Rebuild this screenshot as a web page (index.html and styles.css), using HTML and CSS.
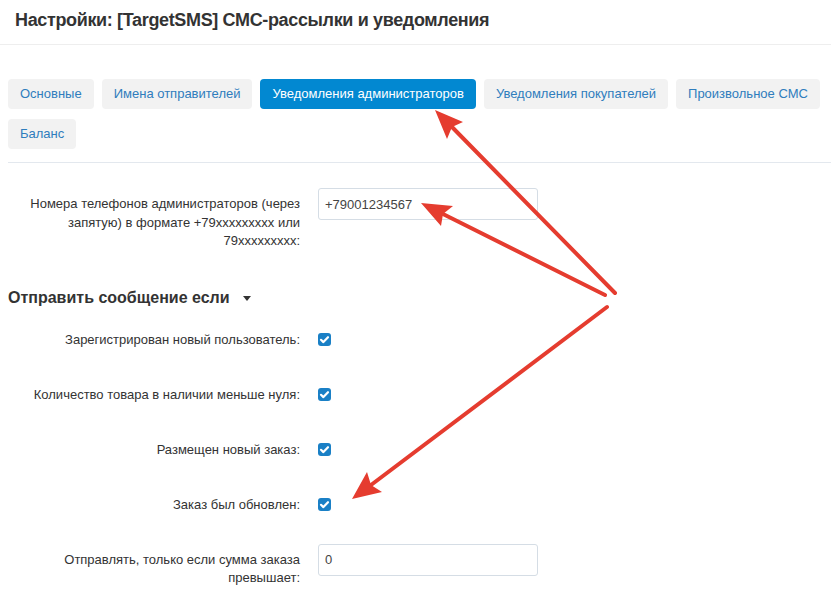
FILE: index.html
```html
<!DOCTYPE html>
<html lang="ru">
  <head>
    <meta charset="UTF-8" />
    <meta name="viewport" content="width=device-width, initial-scale=1.0" />
    <title>TargetSMS</title>
    <link rel="stylesheet" href="styles.css">
  </head>
  <body>
    <div class="page-header">
      <h1>Настройки: [TargetSMS] СМС-рассылки и уведомления</h1>
    </div>

    <div class="content">
      <div class="tabs">
        <a href="#" class="tab">Основные</a>
        <a href="#" class="tab">Имена отправителей</a>
        <a href="#" class="tab active">Уведомления администраторов</a>
        <a href="#" class="tab">Уведомления покупателей</a>
        <a href="#" class="tab">Произвольное СМС</a>
        <a href="#" class="tab">Баланс</a>
      </div>

      <div class="form">
        <div class="form-group">
          <label class="control-label">Номера телефонов администраторов (через запятую) в формате +79xxxxxxxxx или 79xxxxxxxxx:</label>
          <input class="form-control" type="text" value="+79001234567" />
        </div>

        <h3 class="section-title">Отправить сообщение если <span class="caret"></span></h3>

        <div class="form-group check-group">
          <label class="control-label">Зарегистрирован новый пользователь:</label>
          <div class="check-cell"><span class="check"><svg viewBox="0 0 13 13" width="13" height="13"><path d="M3 6.8 L5.4 9.1 L10 4.2" fill="none" stroke="#fff" stroke-width="2.2" stroke-linecap="round" stroke-linejoin="round"/></svg></span></div>
        </div>
        <div class="form-group check-group">
          <label class="control-label">Количество товара в наличии меньше нуля:</label>
          <div class="check-cell"><span class="check"><svg viewBox="0 0 13 13" width="13" height="13"><path d="M3 6.8 L5.4 9.1 L10 4.2" fill="none" stroke="#fff" stroke-width="2.2" stroke-linecap="round" stroke-linejoin="round"/></svg></span></div>
        </div>
        <div class="form-group check-group">
          <label class="control-label">Размещен новый заказ:</label>
          <div class="check-cell"><span class="check"><svg viewBox="0 0 13 13" width="13" height="13"><path d="M3 6.8 L5.4 9.1 L10 4.2" fill="none" stroke="#fff" stroke-width="2.2" stroke-linecap="round" stroke-linejoin="round"/></svg></span></div>
        </div>
        <div class="form-group check-group">
          <label class="control-label">Заказ был обновлен:</label>
          <div class="check-cell"><span class="check"><svg viewBox="0 0 13 13" width="13" height="13"><path d="M3 6.8 L5.4 9.1 L10 4.2" fill="none" stroke="#fff" stroke-width="2.2" stroke-linecap="round" stroke-linejoin="round"/></svg></span></div>
        </div>
        <div class="form-group last-group">
          <label class="control-label">Отправлять, только если сумма заказа превышает:</label>
          <input class="form-control" type="text" value="0" />
        </div>
      </div>
    </div>

    <!-- стрелки поверх скриншота -->
    <svg class="arrows" width="831" height="594" viewBox="0 0 831 594">
      <g stroke="#e53c2f" stroke-width="4" stroke-linecap="round" fill="none">
        <line x1="615" y1="293" x2="452" y2="127" />
        <line x1="605" y1="295" x2="443" y2="214" />
        <line x1="607" y1="307" x2="371" y2="485" />
      </g>
      <g fill="#e53c2f">
        <polygon points="435,110 463,122 452,127 447,139" />
        <polygon points="421,203 453,206 443,214 441,226" />
        <polygon points="352,499 382,492 371,485 367,472" />
      </g>
    </svg>
  </body>
</html>
```

FILE: styles.css
```css
html,
body {
  overflow: hidden;
}
body {
  font-family: "Liberation Sans", Arial, sans-serif;
  font-size: 13px;
  color: #333;
  margin: 0;
  padding: 0;
  background-color: #fff;
  position: relative;
  min-height: 594px;
}
.page-header {
  height: 44px;
  border-bottom: 1px solid #eee;
  padding: 0 15px;
}
.page-header h1 {
  margin: 0;
  font-size: 18px;
  letter-spacing: -0.35px;
  line-height: 40px;
  font-weight: bold;
  color: #333;
}
.content {
  padding: 34px 0 0 8px;
}
/* вкладки */
.tabs {
  display: flex;
  flex-wrap: wrap;
  gap: 10px 8px;
  padding-bottom: 13px;
  border-bottom: 1px solid #e3e8ee;
}
.tab {
  display: inline-block;
  height: 30px;
  line-height: 30px;
  padding: 0 12px;
  background-color: #f2f2f2;
  color: #2f7dbd;
  text-decoration: none;
  border-radius: 4px;
  font-size: 13px;
}
.tab.active {
  background-color: #0288d1;
  color: #fff;
}
/* форма */
.form {
  padding-top: 25px;
}
.form-group {
  display: grid;
  grid-template-columns: 292px 220px;
  column-gap: 18px;
  align-items: start;
}
.control-label {
  text-align: right;
  padding-top: 7px;
  line-height: 18.6px;
  color: #333;
}
.form-control {
  box-sizing: border-box;
  width: 220px;
  height: 32px;
  padding: 0 6px;
  border: 1px solid #d5dde5;
  border-radius: 3px;
  font-family: "Liberation Sans", Arial, sans-serif;
  font-size: 13px;
  color: #444;
  background: #fff;
}
.section-title {
  margin: 37px 0 0 0;
  font-size: 16px;
  line-height: 20px;
  font-weight: bold;
  color: #333;
}
.caret {
  display: inline-block;
  width: 0;
  height: 0;
  margin-left: 9px;
  vertical-align: middle;
  border-left: 4.5px solid transparent;
  border-right: 4.5px solid transparent;
  border-top: 5px solid #333;
}
.check-group {
  height: 34px;
  margin-bottom: 21px;
}
.section-title + .check-group {
  margin-top: 16px;
}
.check-cell {
  padding-top: 9px;
}
.check {
  display: block;
  width: 13px;
  height: 13px;
  border-radius: 3px;
  background-color: #1a80c6;
}
.check svg {
  display: block;
}
.last-group {
  margin-top: 2px;
}
.arrows {
  position: absolute;
  top: 0;
  left: 0;
  pointer-events: none;
}
```
